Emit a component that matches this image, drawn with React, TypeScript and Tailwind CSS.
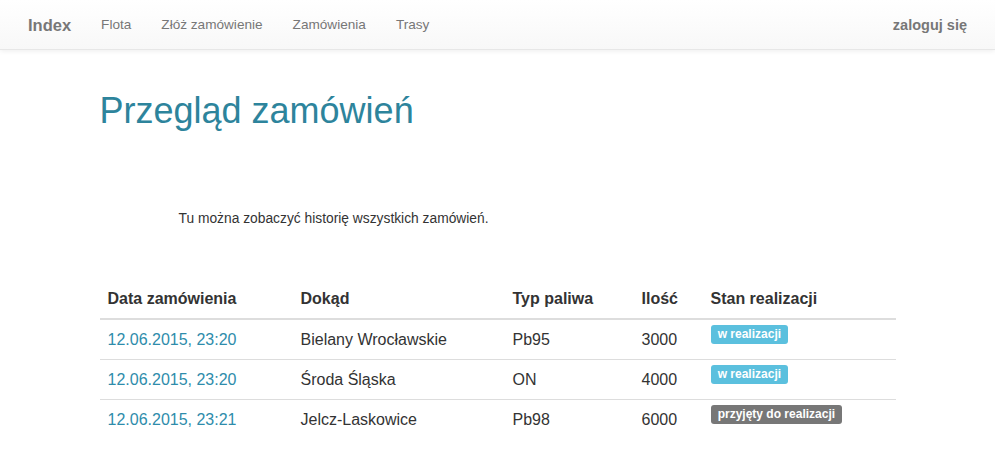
import React from "react";

const rows = [
  { date: "12.06.2015, 23:20", dest: "Bielany Wrocławskie", fuel: "Pb95", qty: "3000", status: "w realizacji", info: true },
  { date: "12.06.2015, 23:20", dest: "Środa Śląska", fuel: "ON", qty: "4000", status: "w realizacji", info: true },
  { date: "12.06.2015, 23:21", dest: "Jelcz-Laskowice", fuel: "Pb98", qty: "6000", status: "przyjęty do realizacji", info: false },
];

export default function App() {
  return (
    <div className="min-h-[459px] bg-white text-[#333] font-['Liberation_Sans',Arial,sans-serif]">
      <nav className="h-[50px] border-b border-[#e7e7e7] bg-gradient-to-b from-white to-[#f8f8f8] shadow-[inset_0_1px_0_rgba(255,255,255,0.15),0_1px_5px_rgba(0,0,0,0.075)] flex items-center text-[#777]">
        <a className="pl-[28px] pr-[15px] text-[16.5px] font-bold leading-[20px]">Index</a>
        <ul className="flex text-[13.6px] leading-[20px]">
          <li className="px-[15px]">Flota</li>
          <li className="px-[15px]">Złóż zamówienie</li>
          <li className="px-[15px]">Zamówienia</li>
          <li className="px-[15px]">Trasy</li>
        </ul>
        <div className="ml-auto pr-[28px] text-[14.5px] font-bold leading-[20px]">zaloguj się</div>
      </nav>
      <div className="w-[796px] mx-auto">
        <h1 className="mt-[41px] text-[36px] leading-[1.1] text-[#2d849c] font-normal">Przegląd zamówień</h1>
        <p className="mt-[78px] pl-[79px] text-[13.8px] leading-[20px]">Tu można zobaczyć historię wszystkich zamówień.</p>
        <table className="mt-[50px] w-full border-collapse text-[16px] leading-[23px]">
          <thead>
            <tr className="border-b-2 border-[#ddd] text-left">
              <th className="w-[193px] p-[8px] font-bold">Data zamówienia</th>
              <th className="w-[212px] p-[8px] font-bold">Dokąd</th>
              <th className="w-[129px] p-[8px] font-bold">Typ paliwa</th>
              <th className="w-[69px] p-[8px] font-bold">Ilość</th>
              <th className="p-[8px] font-bold">Stan realizacji</th>
            </tr>
          </thead>
          <tbody>
            {rows.map((r, i) => (
              <tr key={i} className={i < rows.length - 1 ? "border-b border-[#ddd]" : ""}>
                <td className="p-[8px] align-top text-[#2e8cab]">{r.date}</td>
                <td className="p-[8px] align-top">{r.dest}</td>
                <td className="p-[8px] align-top">{r.fuel}</td>
                <td className="p-[8px] align-top">{r.qty}</td>
                <td className="p-[8px] align-top">
                  <span
                    className={
                      "inline-block align-top -mt-[3px] text-[12px] font-bold leading-[12px] text-white rounded-[3px] pt-[3px] pb-[4px] px-[7.2px] " +
                      (r.info ? "bg-[#5bc0de]" : "bg-[#777]")
                    }
                  >
                    {r.status}
                  </span>
                </td>
              </tr>
            ))}
          </tbody>
        </table>
      </div>
    </div>
  );
}
